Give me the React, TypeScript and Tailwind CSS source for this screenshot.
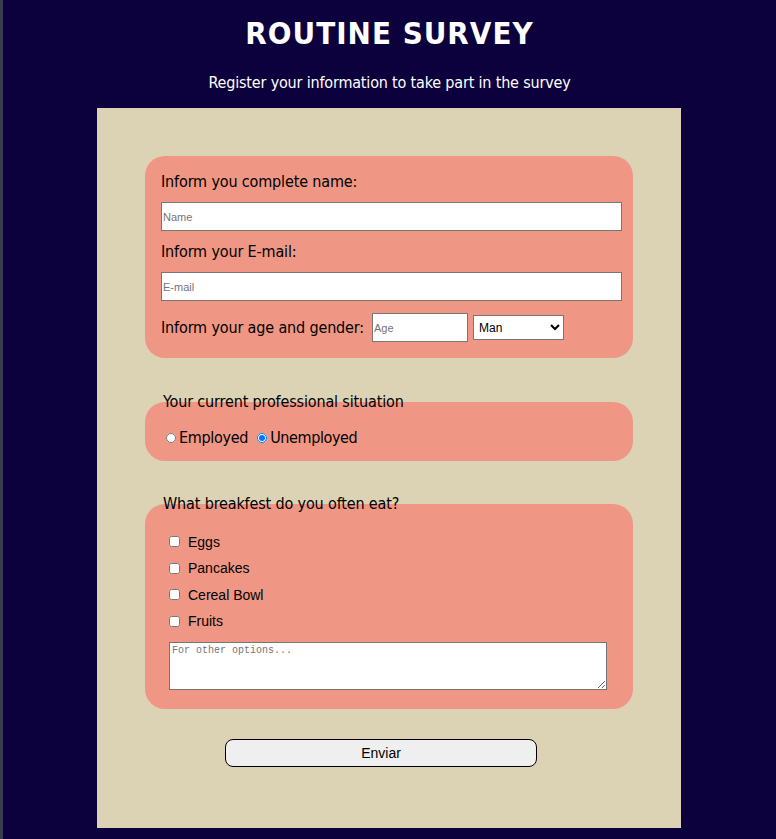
import type { FC } from "react";

const breakfasts = ["Eggs", "Pancakes", "Cereal Bowl", "Fruits"];

const tahoma =
  "font-['DejaVu_Sans_Condensed','DejaVu_Sans',sans-serif] font-stretch-condensed tracking-[-0.15px]";

const Section: FC<{ legend?: string; className?: string; children: React.ReactNode }> = ({
  legend,
  className,
  children,
}) => (
  <div className="flex flex-col">
    {legend && (
      <div className={"relative z-10 -mb-[9px] h-[18px] pl-[18px] text-[16px] leading-[18px] text-black " + tahoma}>
        {legend}
      </div>
    )}
    <div className={"rounded-[20px] bg-[#ef9784] " + (className ?? "")}>{children}</div>
  </div>
);

const App: FC = () => {
  return (
    <div className="min-h-[839px] border-l-[3px] border-[#3a3d50] bg-[#0c003d] pb-[11px]">
      <h1
        className={
          "pt-[14px] text-center font-['DejaVu_Sans_Condensed','DejaVu_Sans',sans-serif] text-[31px] leading-[38px] font-bold tracking-[1px] text-white font-stretch-condensed"
        }
      >
        ROUTINE SURVEY
      </h1>
      <p
        className={
          "mt-[21px] text-center font-['DejaVu_Sans_Condensed','DejaVu_Sans',sans-serif] text-[16px] leading-[19px] tracking-[-0.18px] text-white font-stretch-condensed"
        }
      >
        Register your information to take part in the survey
      </p>

      <form className="mt-[16px] ml-[94px] flex h-[720px] w-[584px] flex-col bg-[#dcd2b4] px-12 pt-12">
        <Section className="flex flex-col px-4 pt-4 pb-4">
          <label className={"text-[16px] leading-[19px] text-black " + tahoma}>
            Inform you complete name:
          </label>
          <input
            type="text"
            placeholder="Name"
            className="mt-[11px] h-[29px] w-[461px] border border-[#767676] bg-white px-[1px] font-['Liberation_Sans',sans-serif] text-[11px] placeholder:text-[#757575]"
          />
          <label className={"mt-[11px] text-[16px] leading-[19px] text-black " + tahoma}>
            Inform your E-mail:
          </label>
          <input
            type="email"
            placeholder="E-mail"
            className="mt-[11px] h-[29px] w-[461px] border border-[#767676] bg-white px-[1px] font-['Liberation_Sans',sans-serif] text-[11px] placeholder:text-[#757575]"
          />
          <div className="mt-[12px] flex items-center">
            <label className={"text-[16px] leading-[19px] text-black " + tahoma}>
              Inform your age and gender:
            </label>
            <input
              type="number"
              placeholder="Age"
              className="ml-[8px] h-[29px] w-[96px] border border-[#767676] bg-white px-[1px] font-['Liberation_Sans',sans-serif] text-[11px] placeholder:text-[#757575]"
            />
            <select
              defaultValue="Man"
              className="ml-[5px] h-[25px] w-[91px] border border-[#767676] bg-white pl-[1px] font-['Liberation_Sans',sans-serif] text-[12px] text-black"
            >
              <option>Man</option>
              <option>Woman</option>
              <option>Other</option>
            </select>
          </div>
        </Section>

        <div className="mt-[35px]">
          <Section legend="Your current professional situation" className="h-[59px] px-[21px] pt-[26px]">
            <div className={"flex items-center text-[16px] leading-[19px] text-black " + tahoma}>
              <input type="radio" name="job" className="m-0 mr-[3px] h-[10px] w-[10px]" />
              <span className="tracking-[-0.3px]">Employed</span>
              <input
                type="radio"
                name="job"
                defaultChecked
                className="m-0 mr-[3px] ml-[9px] h-[10px] w-[10px]"
              />
              <span className="tracking-[-0.4px]">Unemployed</span>
            </div>
          </Section>
        </div>

        <div className="mt-[34px]">
          <Section legend="What breakfest do you often eat?" className="h-[205px] px-6 pt-[32px]">
            <div className="flex flex-col gap-[15.5px]">
              {breakfasts.map((b) => (
                <label
                  key={b}
                  className="flex h-[11px] items-center font-['Liberation_Sans',sans-serif] text-[14px] leading-[16px] text-black"
                >
                  <input type="checkbox" className="m-0 h-[11px] w-[11px]" />
                  <span className="ml-[8px]">{b}</span>
                </label>
              ))}
            </div>
            <textarea
              placeholder="For other options..."
              className="mt-[15px] block h-[48px] w-[438px] border border-[#767676] bg-white px-[2px] py-[1px] font-['Liberation_Mono',monospace] text-[10px] leading-[13px] placeholder:text-[#757575]"
            />
          </Section>
        </div>

        <button
          type="submit"
          className="mt-[30px] ml-[80px] h-[28px] w-[312px] self-start rounded-[8px] border border-black bg-[#efefef] font-['Liberation_Sans',sans-serif] text-[14px] text-black"
        >
          Enviar
        </button>
      </form>
    </div>
  );
};

export default App;
